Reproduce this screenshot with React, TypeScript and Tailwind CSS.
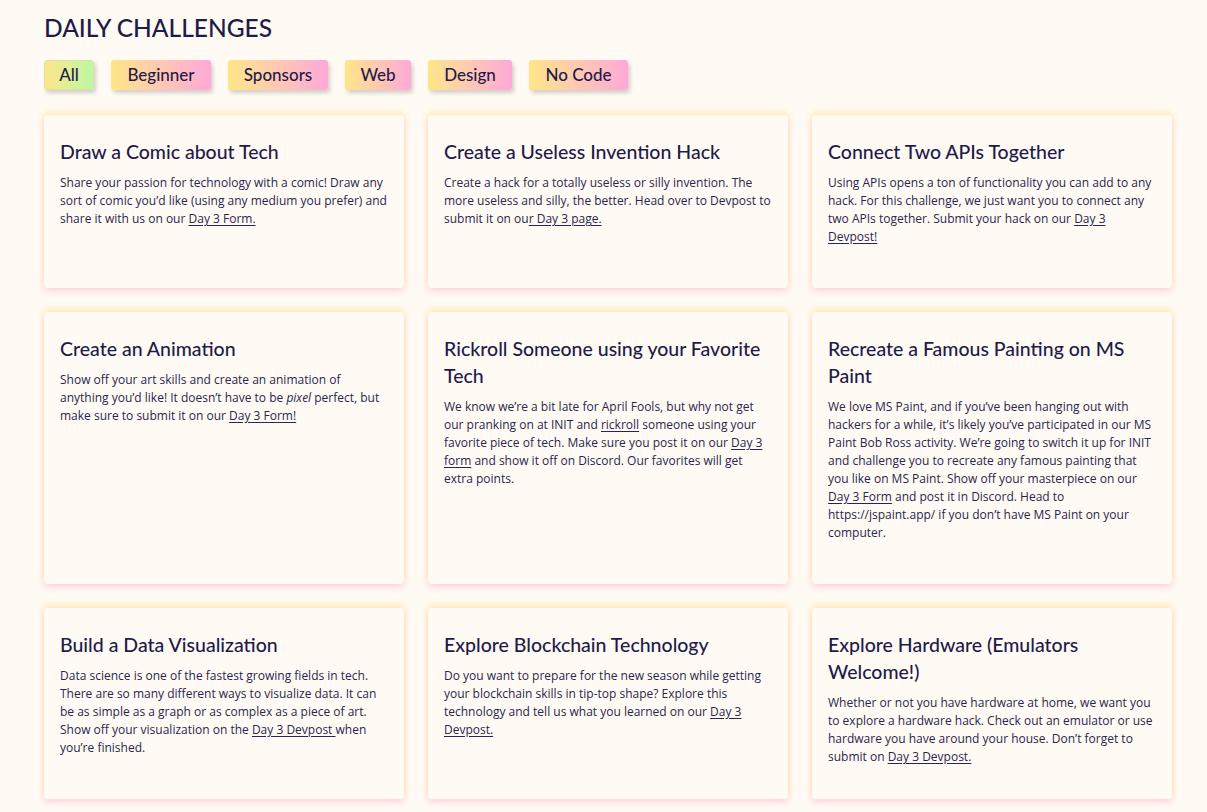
import React from "react";

type Part = string | { link: string } | { em: string };

const filters = [
  { label: "All", w: "w-[50px]" },
  { label: "Beginner", w: "w-[100px]" },
  { label: "Sponsors", w: "w-[100px]" },
  { label: "Web", w: "w-[66px]" },
  { label: "Design", w: "w-[84px]" },
  { label: "No Code", w: "w-[99px]" },
];

const challenges: { title: string; body: Part[] }[] = [
  {
    title: "Draw a Comic about Tech",
    body: [
      "Share your passion for technology with a comic! Draw any sort of comic you’d like (using any medium you prefer) and share it with us on our ",
      { link: "Day 3 Form." },
    ],
  },
  {
    title: "Create a Useless Invention Hack",
    body: [
      "Create a hack for a totally useless or silly invention. The more useless and silly, the better. Head over to Devpost to submit it on ou",
      { link: "r Day 3 page. " },
    ],
  },
  {
    title: "Connect Two APIs Together",
    body: [
      "Using APIs opens a ton of functionality you can add to any hack. For this challenge, we just want you to connect any two APIs together. Submit your hack on our ",
      { link: "Day 3 Devpost!" },
    ],
  },
  {
    title: "Create an Animation",
    body: [
      "Show off your art skills and create an animation of anything you’d like! It doesn’t have to be ",
      { em: "pixel" },
      " perfect, but make sure to submit it on our ",
      { link: "Day 3 Form!" },
    ],
  },
  {
    title: "Rickroll Someone using your Favorite Tech",
    body: [
      "We know we’re a bit late for April Fools, but why not get our pranking on at INIT and ",
      { link: "rickroll" },
      " someone using your favorite piece of tech. Make sure you post it on our ",
      { link: "Day 3 form" },
      " and show it off on Discord. Our favorites will get extra points.",
    ],
  },
  {
    title: "Recreate a Famous Painting on MS Paint",
    body: [
      "We love MS Paint, and if you’ve been hanging out with hackers for a while, it’s likely you’ve participated in our MS Paint Bob Ross activity. We’re going to switch it up for INIT and challenge you to recreate any famous painting that you like on MS Paint. Show off your masterpiece on our ",
      { link: "Day 3 Form" },
      " and post it in Discord. Head to https://jspaint.app/ if you don’t have MS Paint on your computer.",
    ],
  },
  {
    title: "Build a Data Visualization",
    body: [
      "Data science is one of the fastest growing fields in tech. There are so many different ways to visualize data. It can be as simple as a graph or as complex as a piece of art. Show off your visualization on the ",
      { link: "Day 3 Devpost " },
      "when you’re finished.",
    ],
  },
  {
    title: "Explore Blockchain Technology",
    body: [
      "Do you want to prepare for the new season while getting your blockchain skills in tip-top shape? Explore this technology and tell us what you learned on our ",
      { link: "Day 3 Devpost." },
    ],
  },
  {
    title: "Explore Hardware (Emulators Welcome!)",
    body: [
      "Whether or not you have hardware at home, we want you to explore a hardware hack. Check out an emulator or use hardware you have around your house. Don’t forget to submit on ",
      { link: "Day 3 Devpost." },
    ],
  },
];

export default function App() {
  return (
    <div className="min-h-screen bg-[#fffaf3] pl-[44px] pr-[35px] pt-[12px] text-[#1e1b4b] font-['Lato',sans-serif]">
      <h1 className="text-[24.5px] font-medium leading-[32px]">DAILY CHALLENGES</h1>

      <div className="mt-[16px] flex gap-[17px]">
        {filters.map((f, i) => (
          <button
            key={f.label}
            className={
              "h-[30px] rounded-[3px] text-center text-[17px] font-medium shadow-[2px_3px_4px_rgba(0,0,0,0.18)] " +
              f.w +
              " " +
              (i === 0
                ? "bg-gradient-to-r from-[#fde68a] to-[#bbf7a5] border border-[#d9e79a]"
                : "bg-gradient-to-r from-[#fee685] to-[#ffa8d6]")
            }
          >
            {f.label}
          </button>
        ))}
      </div>

      <div className="mt-[25px] grid grid-cols-3 grid-rows-[173px_272px_191px] gap-[24px]">
        {challenges.map((c) => (
          <div
            key={c.title}
            className="rounded-[4px] bg-[#fffbf4] px-[16px] pt-[23px] shadow-[0_-3px_6px_rgba(255,225,110,0.45),0_3px_6px_rgba(255,160,205,0.45)]"
          >
            <h2 className="text-[19.5px] font-medium leading-[27px]">{c.title}</h2>
            <p className="mt-[9px] font-['Open_Sans',sans-serif] text-[12px] leading-[18px] text-[#2a2550]">
              {c.body.map((p, i) =>
                typeof p === "string" ? (
                  <span key={i}>{p}</span>
                ) : "link" in p ? (
                  <a key={i} className="underline underline-offset-2">
                    {p.link}
                  </a>
                ) : (
                  <em key={i}>{p.em}</em>
                )
              )}
            </p>
          </div>
        ))}
      </div>
    </div>
  );
}
